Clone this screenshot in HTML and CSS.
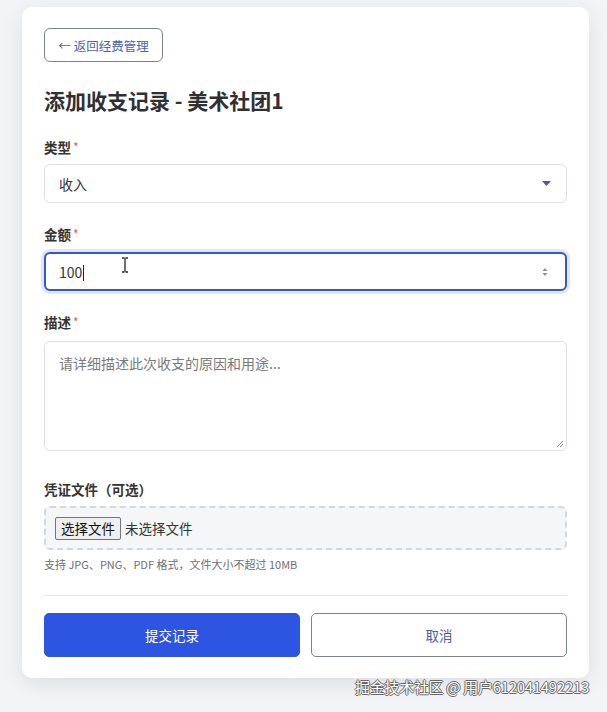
FILE: index.html
```html
<!DOCTYPE html>
<html lang="zh-CN">
<head>
<meta charset="utf-8">
<title>添加收支记录</title>
<link rel="stylesheet" href="styles.css">
</head>
<body>
<main class="card">
  <div class="back-row"><button class="back-btn">← 返回经费管理</button></div>
  <h1 class="title">添加收支记录 - 美术社团1</h1>

  <div class="field">
    <label class="label">类型<span class="req">*</span></label>
    <div class="control select">
      <span class="value">收入</span>
      <svg class="caret-down" width="9" height="5" viewBox="0 0 9 5"><path d="M0 0h9L4.5 5z" fill="#4b5bb3"/></svg>
    </div>
  </div>

  <div class="field">
    <label class="label">金额<span class="req">*</span></label>
    <div class="control number focused">
      <span class="value">100<span class="text-caret"></span></span>
      <svg class="spinner" width="8" height="12" viewBox="0 0 8 12"><path d="M1.5 5L4 2 6.5 5z" fill="#8a8f99"/><path d="M1.5 7L4 10 6.5 7z" fill="#8a8f99"/></svg>
      <svg class="ibeam" width="8" height="16" viewBox="0 0 8 16"><path d="M1 1h2.5M4.5 1H7M4 1.5v13M1 15h2.5M4.5 15H7" stroke="#222" stroke-width="1.3" fill="none"/></svg>
    </div>
  </div>

  <div class="field field-desc">
    <label class="label">描述<span class="req">*</span></label>
    <div class="control textarea">
      <span class="placeholder">请详细描述此次收支的原因和用途...</span>
      <svg class="grip" width="8" height="8" viewBox="0 0 8 8"><path d="M7 1L1 7M7 4L4 7" stroke="#888" stroke-width="1"/></svg>
    </div>
  </div>

  <div class="field field-file">
    <label class="label">凭证文件（可选）</label>
    <div class="file-box">
      <span class="file-btn">选择文件</span>
      <span class="file-name">未选择文件</span>
    </div>
    <p class="help">支持 JPG、PNG、PDF 格式，文件大小不超过 10MB</p>
  </div>

  <div class="actions">
    <button class="btn btn-primary">提交记录</button>
    <button class="btn btn-outline">取消</button>
  </div>
</main>
<div class="watermark">掘金技术社区 @ 用户612041492213</div>
</body>
</html>
```
FILE: styles.css
```css
* { box-sizing: border-box; }
html, body { margin: 0; padding: 0; }
body {
  background: #f3f4f7;
  font-family: "Noto Sans CJK SC", "Noto Sans", sans-serif;
  color: #333;
  padding: 7px 18px 0 22px;
  height: 712px;
  overflow: hidden;
  position: relative;
}
.card {
  background: #fff;
  border-radius: 10px;
  box-shadow: 0 6px 22px rgba(0,0,0,0.09);
  padding: 21px 22px 21px 22px;
  width: 567px;
}
.back-row { display: flex; }
.back-btn {
  height: 34px;
  width: 119px;
  border: 1px solid #7d8296;
  border-radius: 6px;
  background: #fff;
  color: #4f5fae;
  font-family: inherit;
  font-size: 12.5px;
  padding: 0;
}
.title {
  margin: 23px 0 22px;
  font-size: 21px;
  line-height: 30px;
  font-weight: 700;
  color: #2f3033;
}
.field { margin-bottom: 21px; }
.label {
  display: block;
  font-size: 13.5px;
  line-height: 20px;
  font-weight: 700;
  color: #333;
  margin-bottom: 7px;
}
.req { color: #d4606a; font-weight: 400; margin-left: 2px; font-size: 12px; vertical-align: top; }
.control {
  position: relative;
  display: flex;
  align-items: center;
  border: 1px solid #dcdfe6;
  border-radius: 6px;
  background: #fff;
  padding: 0 14px;
  font-size: 14px;
  color: #333;
}
.select { height: 39px; justify-content: space-between; }
.select .caret-down { margin-right: 1px; }
.number {
  height: 39px;
  justify-content: space-between;
  margin-top: 8px;
}
.focused {
  border: 2px solid #3d54c4;
  box-shadow: 0 0 0 3px rgba(70,95,210,0.16);
  padding: 0 13px;
}
.text-caret {
  display: inline-block;
  width: 1px;
  height: 16px;
  background: #222;
  vertical-align: -3px;
  margin-left: 1px;
}
.spinner { margin-right: 3px; }
.ibeam { position: absolute; left: 75px; top: 3px; }
.field-desc { margin-bottom: 0; }
.field-desc .label { margin-bottom: 9px; }
.textarea {
  height: 110px;
  align-items: flex-start;
  padding-top: 11px;
  margin-bottom: 28px;
}
.placeholder { color: #7a7a7a; font-size: 14px; line-height: 20px; }
.grip { position: absolute; right: 2px; bottom: 2px; }
.field-file { margin-bottom: 0; }
.file-box {
  height: 44px;
  border: 2px dashed #d3d7de;
  border-radius: 6px;
  background: #f4f6f8;
  display: flex;
  align-items: center;
  padding: 0 9px;
  font-size: 13.5px;
  color: #333;
}
.file-btn {
  display: inline-block;
  background: #efefef;
  border: 1px solid #767676;
  border-radius: 2px;
  padding: 0 5px;
  height: 23px;
  line-height: 21px;
  font-size: 13.5px;
  color: #111;
  margin-right: 4px;
}
.file-name { color: #333; }
.help {
  margin: 6px 0 0;
  font-size: 11px;
  line-height: 16px;
  color: #6b6f76;
}
.actions {
  margin-top: 23px;
  border-top: 1px solid #e8e9ec;
  padding-top: 17px;
  display: flex;
  gap: 11px;
}
.btn {
  flex: 1;
  height: 44px;
  border-radius: 5px;
  font-family: inherit;
  font-size: 13.5px;
  padding: 0;
}
.btn-primary {
  background: #2e55e2;
  color: #fff;
  border: 1px solid #2e55e2;
}
.btn-outline {
  background: #fff;
  color: #4a5ca8;
  border: 1px solid #7d8296;
}
.watermark {
  position: absolute;
  right: 18px;
  top: 676px;
  font-size: 15px;
  color: #fff;
  letter-spacing: -0.3px;
  text-shadow: -1px 0 #666, 1px 0 #666, 0 -1px #666, 0 1px #666;
}
```
